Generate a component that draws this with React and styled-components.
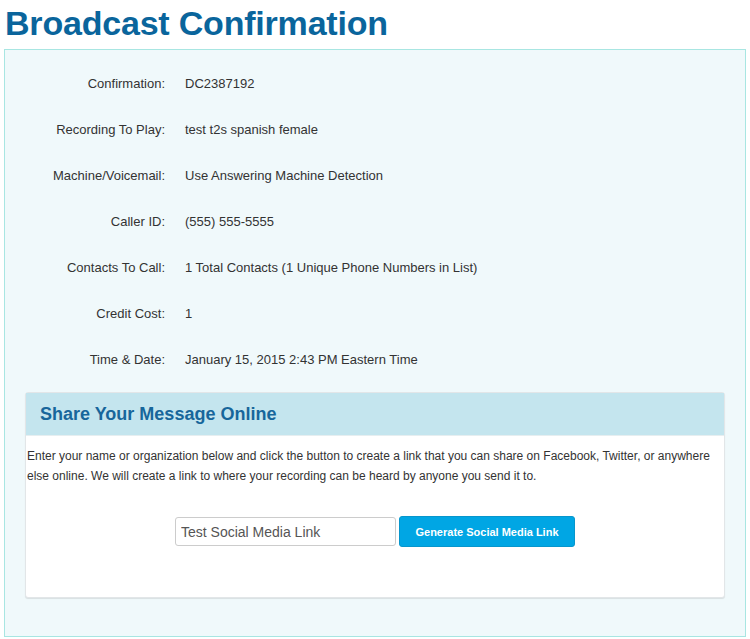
import React from 'react'
import styled, { createGlobalStyle } from 'styled-components'

const GlobalStyle = createGlobalStyle`
    body {
        margin: 0;
        background: #ffffff;
        font-family: "Liberation Sans", Arial, sans-serif;
    }
`

const Page = styled.div`
    width: 750px;
    padding: 4px 0 0 4px;
    box-sizing: border-box;
`

const Title = styled.h1`
    margin: 0 0 7px 1px;
    font-size: 34px;
    line-height: 38px;
    font-weight: bold;
    color: #0a659c;
    letter-spacing: -0.2px;
`

const Panel = styled.section`
    width: 742px;
    height: 588px;
    box-sizing: border-box;
    border: 1px solid #a8e6e2;
    background: #f0f9fb;
    padding: 11px 20px 0 20px;
`

const Details = styled.div`
    display: grid;
    grid-template-columns: 140px 1fr;
    column-gap: 20px;
    grid-auto-rows: 46px;
    margin-bottom: 9px;
`

const Label = styled.div`
    text-align: right;
    font-size: 13px;
    color: #333;
    line-height: 46px;
`

const Value = styled.div`
    font-size: 13px;
    color: #333;
    line-height: 46px;
`

const SharePanel = styled.div`
    background: #fff;
    border: 1px solid #e2e6e8;
    border-radius: 3px;
    box-shadow: 0 1px 1px rgba(0, 0, 0, 0.1);
    height: 206px;
    box-sizing: border-box;
`

const ShareHeader = styled.div`
    background: #c4e5ee;
    height: 42px;
    display: flex;
    align-items: center;
    padding-left: 14px;
    border-bottom: 1px solid #e6eef0;
`

const ShareTitle = styled.h2`
    margin: 0;
    font-size: 18px;
    font-weight: bold;
    color: #17669b;
`

const Intro = styled.p`
    margin: 10px 0 0 0;
    padding: 0 1px;
    font-size: 12px;
    line-height: 20px;
    color: #333;
`

const LinkForm = styled.div`
    display: flex;
    justify-content: center;
    align-items: center;
    gap: 3px;
    margin-top: 30px;
`

const NameInput = styled.input`
    width: 221px;
    height: 29px;
    box-sizing: border-box;
    border: 1px solid #ccc;
    border-radius: 3px;
    padding: 0 5px;
    font-family: "Liberation Sans", Arial, sans-serif;
    font-size: 14px;
    color: #555;
    background: #fff;
    outline: none;
`

const GenerateButton = styled.button`
    width: 176px;
    height: 31px;
    border: 1px solid #0796cc;
    border-radius: 3px;
    background: #00a6e4;
    color: #fff;
    font-family: "Liberation Sans", Arial, sans-serif;
    font-size: 11px;
    font-weight: bold;
    cursor: pointer;
`

const details = [
    ['Confirmation:', 'DC2387192'],
    ['Recording To Play:', 'test t2s spanish female'],
    ['Machine/Voicemail:', 'Use Answering Machine Detection'],
    ['Caller ID:', '(555) 555-5555'],
    ['Contacts To Call:', '1 Total Contacts (1 Unique Phone Numbers in List)'],
    ['Credit Cost:', '1'],
    ['Time & Date:', 'January 15, 2015 2:43 PM Eastern Time'],
]

export default function App() {
    return (
        <Page>
            <GlobalStyle />
            <Title>Broadcast Confirmation</Title>
            <Panel>
                <Details>
                    {details.map(([label, value]) => (
                        <React.Fragment key={label}>
                            <Label>{label}</Label>
                            <Value>{value}</Value>
                        </React.Fragment>
                    ))}
                </Details>
                <SharePanel>
                    <ShareHeader>
                        <ShareTitle>Share Your Message Online</ShareTitle>
                    </ShareHeader>
                    <Intro>
                        Enter your name or organization below and click the button to create a link that you can share on Facebook, Twitter, or anywhere else online. We will create a link to where your recording can be heard by anyone you send it to.
                    </Intro>
                    <LinkForm>
                        <NameInput defaultValue="Test Social Media Link" />
                        <GenerateButton>Generate Social Media Link</GenerateButton>
                    </LinkForm>
                </SharePanel>
            </Panel>
        </Page>
    )
}
